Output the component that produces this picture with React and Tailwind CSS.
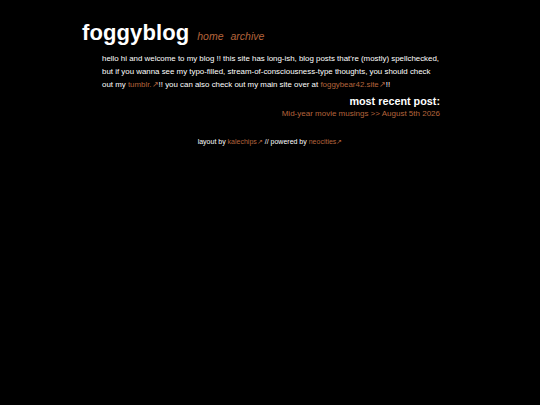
export default function App() {
  const link = "text-[#b5643c]";
  return (
    <div className="min-h-[405px] w-full bg-black text-white" style={{ fontFamily: "'Liberation Sans', Arial, sans-serif" }}>
      <div className="mx-auto w-[376px] pt-[19px]">
        <header className="flex items-baseline gap-[8px]">
          <h1 className="text-[22px] font-bold leading-[28px] tracking-[0.1px]">foggyblog</h1>
          <nav className={`flex gap-[7px] text-[10.5px] italic ${link}`}>
            <span>home</span>
            <span>archive</span>
          </nav>
        </header>
        <div className="mt-[5px] pl-[20px] pr-[18px]">
          <p className="whitespace-nowrap text-[7.9px] leading-[13px]">
            hello hi and welcome to my blog !! this site has long-ish, blog posts that're (mostly) spellchecked,
            <br />
            but if you wanna see my typo-filled, stream-of-consciousness-type thoughts, you should check
            <br />
            out my <span className={link}>tumblr.↗</span>!! you can also check out my main site over at{" "}
            <span className={link}>foggybear42.site↗</span>!!
          </p>
          <div className="mt-[3px] text-right">
            <div className="text-[10.8px] font-bold leading-[14px]">most recent post:</div>
            <div className={`text-[8px] leading-[12px] ${link}`}>Mid-year movie musings &gt;&gt; August 5th 2026</div>
          </div>
        </div>
        <footer className="mt-[17px] text-center text-[7px] leading-[10px]">
          layout by <span className={link}>kalechips↗</span> // powered by <span className={link}>neocities↗</span>
        </footer>
      </div>
    </div>
  );
}
